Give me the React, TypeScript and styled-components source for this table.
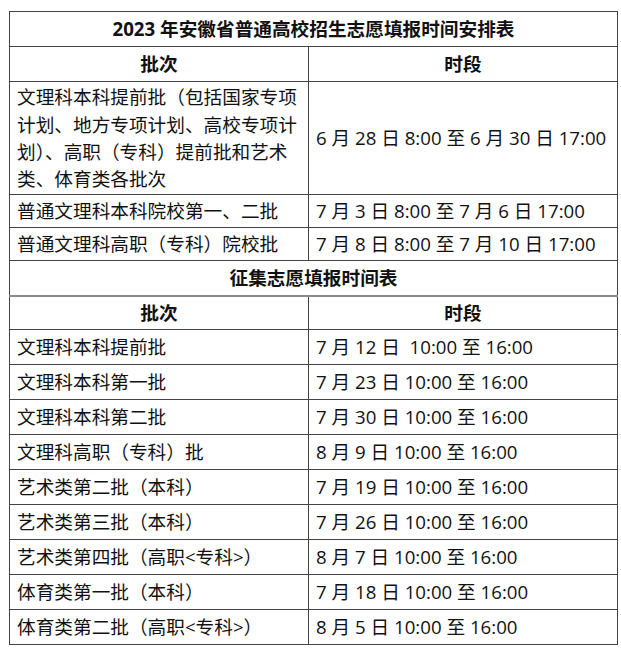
import React from "react";
import styled, { createGlobalStyle } from "styled-components";

const GlobalStyle = createGlobalStyle`
  html, body {
    margin: 0;
    padding: 0;
    background: #ffffff;
  }
  body {
    font-family: "Open Sans", "Noto Sans CJK SC", sans-serif;
    color: #111111;
  }
`;

const Page = styled.div`
  padding: 11px 0 0 9px;
`;

const Table = styled.table`
  border-collapse: collapse;
  table-layout: fixed;
  width: 608px;
  font-size: 18.67px;
  line-height: 27.3px;
`;

const Cell = styled.td<{ $bold?: boolean; $center?: boolean; $h?: number; $wrap?: boolean }>`
  border: 1px solid #444444;
  padding: 0 7px;
  height: ${(p) => (p.$h ? `${p.$h}px` : "33px")};
  box-sizing: border-box;
  vertical-align: middle;
  text-align: ${(p) => (p.$center ? "center" : "left")};
  font-weight: ${(p) => (p.$bold ? 700 : 400)};
  white-space: ${(p) => (p.$wrap ? "normal" : "pre")};
`;

const SoftRow = styled.tr`
  border-top: 2px solid #8a8a8a;
`;

const mainRows = [
  ["普通文理科本科院校第一、二批", "7 月 3 日 8:00 至 7 月 6 日 17:00"],
  ["普通文理科高职（专科）院校批", "7 月 8 日 8:00 至 7 月 10 日 17:00"],
];

const extraRows = [
  ["文理科本科提前批", "7 月 12 日  10:00 至 16:00"],
  ["文理科本科第一批", "7 月 23 日 10:00 至 16:00"],
  ["文理科本科第二批", "7 月 30 日 10:00 至 16:00"],
  ["文理科高职（专科）批", "8 月 9 日 10:00 至 16:00"],
  ["艺术类第二批（本科）", "7 月 19 日 10:00 至 16:00"],
  ["艺术类第三批（本科）", "7 月 26 日 10:00 至 16:00"],
  ["艺术类第四批（高职<专科>）", "8 月 7 日 10:00 至 16:00"],
  ["体育类第一批（本科）", "7 月 18 日 10:00 至 16:00"],
  ["体育类第二批（高职<专科>）", "8 月 5 日 10:00 至 16:00"],
];

export default function App() {
  return (
    <Page>
      <GlobalStyle />
      <Table>
        <colgroup>
          <col style={{ width: 299 }} />
          <col style={{ width: 309 }} />
        </colgroup>
        <tbody>
          <tr>
            <Cell colSpan={2} $bold $center $h={35}>
              2023 年安徽省普通高校招生志愿填报时间安排表
            </Cell>
          </tr>
          <tr>
            <Cell $bold $center $h={35}>批次</Cell>
            <Cell $bold $center $h={35}>时段</Cell>
          </tr>
          <tr>
            <Cell $h={113} $wrap>
              文理科本科提前批（包括国家专项计划、地方专项计划、高校专项计划）、高职（专科）提前批和艺术类、体育类各批次
            </Cell>
            <Cell>6 月 28 日 8:00 至 6 月 30 日 17:00</Cell>
          </tr>
          {mainRows.map(([batch, time]) => (
            <tr key={batch}>
              <Cell>{batch}</Cell>
              <Cell>{time}</Cell>
            </tr>
          ))}
          <tr>
            <Cell colSpan={2} $bold $center $h={35}>
              征集志愿填报时间表
            </Cell>
          </tr>
          <SoftRow>
            <Cell $bold $center $h={34}>批次</Cell>
            <Cell $bold $center $h={34}>时段</Cell>
          </SoftRow>
          {extraRows.map(([batch, time]) => (
            <tr key={batch}>
              <Cell $h={35}>{batch}</Cell>
              <Cell $h={35}>{time}</Cell>
            </tr>
          ))}
        </tbody>
      </Table>
    </Page>
  );
}
